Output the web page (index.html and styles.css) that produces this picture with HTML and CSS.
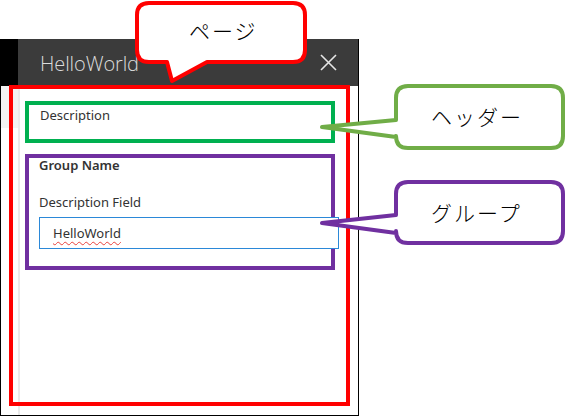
FILE: index.html
```html
<!DOCTYPE html>
<html lang="ja">
<head>
<meta charset="utf-8">
<link rel="stylesheet" href="styles.css">
</head>
<body>
<div class="stage">
  <div class="panel">
    <div class="titlebar">
      <div class="titlebar-edge"></div>
      <div class="titlebar-main">
        <span class="title">HelloWorld</span>
        <svg class="close" width="17" height="17" viewBox="0 0 17 17"><path d="M1 1 L16 16 M16 1 L1 16" stroke="#e6e6e6" stroke-width="1.6" fill="none"/></svg>
      </div>
    </div>
    <div class="panel-body">
      <div class="rail"></div>
      <div class="content">
        <section class="page-header">Description</section>
        <section class="group">
          <div class="group-name">Group Name</div>
          <div class="field-label">Description Field</div>
          <div class="input"><span class="spell">HelloWorld</span></div>
        </section>
      </div>
    </div>
  </div>

  <svg class="annotations" width="566" height="416" viewBox="0 0 566 416">
    <rect x="11" y="87" width="337" height="317" fill="none" stroke="#ff0000" stroke-width="4"/>
    <path d="M149 3 H293 Q305 3 305 15 V50 Q305 62 293 62 H207 L172 81 L167 62 H149 Q137 62 137 50 V15 Q137 3 149 3 Z" fill="#fff" stroke="#ff0000" stroke-width="4" stroke-linejoin="round"/>
    <path d="M408 86 H551 Q563 86 563 98 V136 Q563 148 551 148 H408 Q396 148 396 136 V137 L322 127 L396 120 V98 Q396 86 408 86 Z" fill="#fff" stroke="#70ad47" stroke-width="4" stroke-linejoin="round"/>
    <path d="M408 182 H551 Q563 182 563 194 V231 Q563 243 551 243 H408 Q396 243 396 231 V233 L322 223 L396 215 V194 Q396 182 408 182 Z" fill="#fff" stroke="#7030a0" stroke-width="4" stroke-linejoin="round"/>
  </svg>
  <span class="callout-label label-page">ページ</span>
  <span class="callout-label label-header">ヘッダー</span>
  <span class="callout-label label-group">グループ</span>
</div>
</body>
</html>
```

FILE: styles.css
```css
html, body {
  margin: 0;
  padding: 0;
  background: #fff;
}

.stage {
  position: relative;
  width: 566px;
  height: 416px;
  overflow: hidden;
  font-family: "Noto Sans", "Open Sans", sans-serif;
}

.panel {
  margin-top: 39px;
  width: 359px;
  height: 377px;
  box-sizing: border-box;
  border-right: 1px solid #000;
  border-bottom: 1px solid #000;
  display: flex;
  flex-direction: column;
}

.titlebar {
  display: flex;
  height: 47px;
  flex: none;
}

.titlebar-edge {
  width: 18px;
  background: #000;
}

.titlebar-main {
  flex: 1;
  background: #3b3b3b;
  display: flex;
  align-items: center;
  justify-content: space-between;
  padding: 0 21px 0 22px;
}

.title {
  color: #dcdcdc;
  font-family: "Open Sans", "Noto Sans", sans-serif;
  font-weight: 300;
  font-size: 20px;
  letter-spacing: -0.1px;
  margin-top: 2px;
}

.close {
  display: block;
}

.panel-body {
  flex: 1;
  display: flex;
  border-left: 1px solid #000;
}

.rail {
  width: 17px;
  background: linear-gradient(#f3f3f3 0, #f3f3f3 42px, #fff 42px);
  border-right: 2px solid #ebebeb;
}

.content {
  flex: 1;
  padding: 15px 0 0 5px;
}

.page-header {
  box-sizing: border-box;
  width: 310px;
  height: 42px;
  border: 4px solid #00b050;
  padding: 1px 0 0 11px;
  font-size: 13px;
  line-height: 18px;
  color: #333;
}

.group {
  box-sizing: border-box;
  width: 310px;
  height: 116px;
  margin-top: 11px;
  border: 4px solid #7030a0;
  padding: 0 0 0 10px;
  color: #333;
}

.group-name {
  font-size: 13px;
  font-weight: 600;
  line-height: 16px;
  margin-top: -1px;
}

.field-label {
  font-size: 13px;
  line-height: 16px;
  margin-top: 21px;
}

.input {
  box-sizing: border-box;
  width: 300px;
  height: 32px;
  margin-top: 7px;
  border: 1px solid #2b88d8;
  background: #fff;
  padding-left: 13px;
  font-size: 13px;
  line-height: 30px;
  color: #333;
}

.spell {
  text-decoration: underline wavy #e8413c;
  text-decoration-thickness: 1px;
  text-underline-offset: 3px;
}

.annotations {
  position: absolute;
  left: 0;
  top: 0;
  pointer-events: none;
}

.callout-label {
  position: absolute;
  font-family: "Noto Sans CJK JP", sans-serif;
  font-weight: 300;
  font-size: 21px;
  line-height: 24px;
  color: #000;
  letter-spacing: 2px;
}

.label-page {
  left: 189px;
  top: 18px;
}

.label-header {
  left: 431px;
  top: 104px;
}

.label-group {
  left: 431px;
  top: 200px;
}
```
